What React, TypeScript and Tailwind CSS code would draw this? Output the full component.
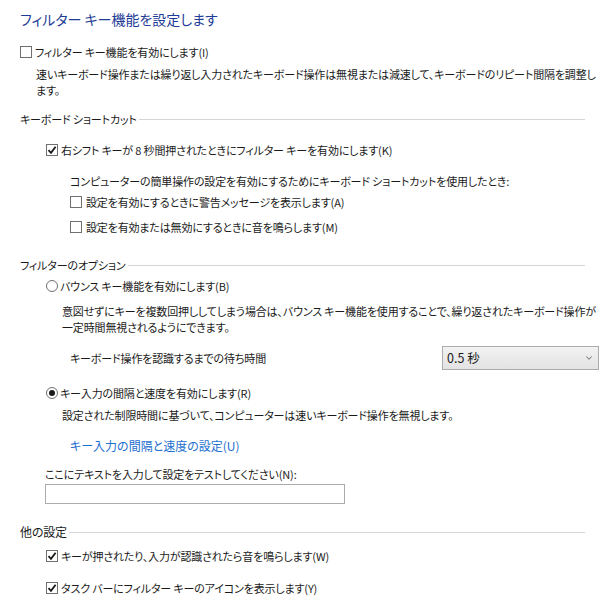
import { ChevronDown } from 'lucide-react';

const font = "font-['Meiryo_UI','Noto_Sans_CJK_JP',sans-serif] [font-feature-settings:'palt']";

const CheckBox = ({ checked }: { checked?: boolean }) => (
  <span className="w-[12px] h-[12px] border border-[#707070] bg-white flex items-center justify-center shrink-0">
    {checked && (
      <svg width="10" height="10" viewBox="0 0 10 10">
        <path d="M1.5 5.2 L4 7.8 L8.6 1.8" fill="none" stroke="#1a1a1a" strokeWidth="1.8" />
      </svg>
    )}
  </span>
);

const Radio = ({ checked }: { checked?: boolean }) => (
  <span className="w-[12px] h-[12px] rounded-full border border-[#707070] bg-white flex items-center justify-center shrink-0">
    {checked && <span className="w-[6px] h-[6px] rounded-full bg-[#1a1a1a]" />}
  </span>
);

const Heading = ({ text, className }: { text: string; className?: string }) => (
  <div className={`flex items-center h-[16px] mr-[14px] ${className ?? ''}`}>
    <span className="whitespace-nowrap">{text}</span>
    <div className="flex-1 h-px bg-[#d5d5d5] ml-[2px]" />
  </div>
);

const Row = ({ children, className }: { children: React.ReactNode; className?: string }) => (
  <div className={`flex items-center h-[16px] whitespace-nowrap ${className ?? ''}`}>{children}</div>
);

export default function App() {
  return (
    <div className={`w-[611px] h-[608px] bg-white text-[#1a1a1a] text-[11px] tracking-[-0.15px] leading-[16px] pl-[20px] pr-[12px] pt-[8px] overflow-hidden ${font}`}>
      <div className="h-[22px] flex items-center text-[14px] tracking-normal text-[#1e3c96] whitespace-nowrap">フィルター キー機能を設定します</div>

      <Row className="mt-[14px] gap-[3px]">
        <CheckBox />
        <span>フィルター キー機能を有効にします(I)</span>
      </Row>
      <div className="mt-[6px] ml-[16px] whitespace-nowrap">
        速いキーボード操作または繰り返し入力されたキーボード操作は無視または減速して、キーボードのリピート間隔を調整し
        <br />
        ます。
      </div>

      <Heading text="キーボード ショートカット" className="mt-[13px]" />
      <Row className="mt-[15px] ml-[26px] gap-[3px]">
        <CheckBox checked />
        <span>右シフト キーが 8 秒間押されたときにフィルター キーを有効にします(K)</span>
      </Row>
      <Row className="mt-[15px] ml-[50px]">コンピューターの簡単操作の設定を有効にするためにキーボード ショートカットを使用したとき:</Row>
      <Row className="mt-[5px] ml-[50px] gap-[4px]">
        <CheckBox />
        <span>設定を有効にするときに警告メッセージを表示します(A)</span>
      </Row>
      <Row className="mt-[9px] ml-[50px] gap-[4px]">
        <CheckBox />
        <span>設定を有効または無効にするときに音を鳴らします(M)</span>
      </Row>

      <Heading text="フィルターのオプション" className="mt-[22px]" />
      <Row className="mt-[5px] ml-[26px] gap-[2px]">
        <Radio />
        <span>バウンス キー機能を有効にします(B)</span>
      </Row>
      <div className="mt-[9px] ml-[42px] whitespace-nowrap">
        意図せずにキーを複数回押ししてしまう場合は、バウンス キー機能を使用することで、繰り返されたキーボード操作が
        <br />
        一定時間無視されるようにできます。
      </div>
      <div className="mt-[11px] ml-[50px] h-[24px] flex items-center justify-between">
        <span className="whitespace-nowrap">キーボード操作を認識するまでの待ち時間</span>
        <div className="w-[157px] h-[24px] border border-[#acacac] bg-gradient-to-b from-[#f2f2f2] to-[#e3e3e3] flex items-center justify-between pl-[4px] pr-[4px]">
          <span className="text-[12.5px] tracking-normal">0.5 秒</span>
          <ChevronDown size={10} strokeWidth={2.5} className="text-[#808080]" />
        </div>
      </div>
      <Row className="mt-[15px] ml-[26px] gap-[2px]">
        <Radio checked />
        <span>キー入力の間隔と速度を有効にします(R)</span>
      </Row>
      <Row className="mt-[6px] ml-[42px]">設定された制限時間に基づいて、コンピューターは速いキーボード操作を無視します。</Row>
      <Row className="mt-[15px] ml-[50px] text-[12px] tracking-normal text-[#1e6fd0]">キー入力の間隔と速度の設定(U)</Row>

      <Row className="mt-[12px] ml-[25px]">ここにテキストを入力して設定をテストしてください(N):</Row>
      <div className="mt-[2px] ml-[25px] w-[300px] h-[20px] border border-[#acacac] bg-white" />

      <Heading text="他の設定" className="mt-[20px] text-[12px]" />
      <Row className="mt-[8px] ml-[26px] gap-[3px]">
        <CheckBox checked />
        <span>キーが押されたり、入力が認識されたら音を鳴らします(W)</span>
      </Row>
      <Row className="mt-[16px] ml-[26px] gap-[3px]">
        <CheckBox checked />
        <span>タスク バーにフィルター キーのアイコンを表示します(Y)</span>
      </Row>
    </div>
  );
}
